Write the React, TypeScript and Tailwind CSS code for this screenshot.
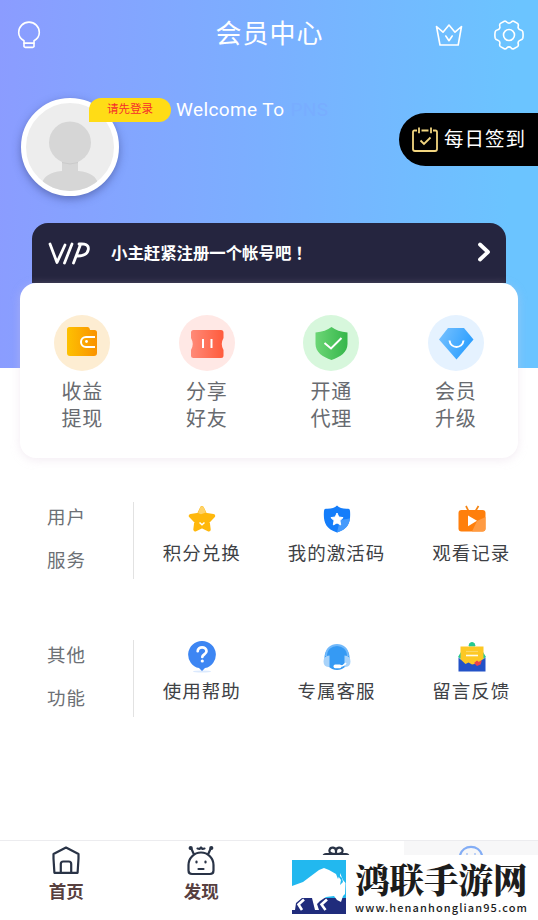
import type { ReactNode } from "react";

interface ItemProps {
  icon: ReactNode;
  label: string;
}

function BulbIcon() {
  return (
    <svg className="w-6 h-7" viewBox="0 0 24 28" fill="none" stroke="white" strokeWidth={1.6} strokeLinejoin="round">
      <path d="M7 22.300v-2.600C4 18 1.700 14.700 1.700 11.400a10.300 10.300 0 0 1 20.600 0c0 3.300-2.300 6.600-5.300 8.300v2.600z" />
      <path d="M7 22.300h10v3.300l-1.200.8H8.200L7 25.600z" />
    </svg>
  );
}

function CrownIcon() {
  return (
    <svg className="w-7 h-6" viewBox="0 0 28 24" fill="none" stroke="white" strokeWidth={1.600} strokeLinecap="round" strokeLinejoin="round">
      <path d="M1.500 3.500l6.500 5.700L14 2l6 7.200 6.500-5.700L23.200 22H5z" />
      <path d="M10.800 13l3.200 4.700L17.200 13" />
    </svg>
  );
}

function GearIcon() {
  return (
    <svg className="w-[30px] h-[30px]" viewBox="0 0 30 30" fill="none" stroke="white" strokeWidth={1.600} strokeLinejoin="round">
      <path d="M10.300 1.300c1-.5 2 .1 2.700 1 .9 1.100 3.100 1.100 4 0 .7-.9 1.700-1.500 2.700-1l3.800 2.100c1 .6 1 1.700.7 2.800-.5 1.500.5 3.200 2 3.600 1.200.3 2.300.8 2.600 2 .4 2.100.4 4.300 0 6.400-.3 1.200-1.400 1.700-2.600 2-1.500.4-2.500 2.100-2 3.600.3 1.100.3 2.200-.7 2.800l-3.800 2.100c-1 .5-2-.1-2.700-1-.9-1.100-3.100-1.100-4 0-.7.9-1.700 1.500-2.700 1l-3.800-2.100c-1-.6-1-1.700-.7-2.800.5-1.500-.5-3.200-2-3.600-1.200-.3-2.300-.8-2.600-2a16 16 0 0 1 0-6.400c.3-1.200 1.400-1.700 2.600-2 1.500-.4 2.500-2.100 2-3.600-.3-1.100-.3-2.200.7-2.800z" />
      <circle cx="15" cy="15" r="5.500" />
    </svg>
  );
}

function Avatar() {
  return (
    <div className="w-[98px] h-[98px] rounded-full border-[5px] border-white bg-[#ededed] overflow-hidden shadow-[0_3px_8px_rgba(50,60,120,0.5)]">
      <svg className="w-full h-full" viewBox="0 0 88 88" fill="#d6d6d6">
        <path d="M36 56h16v12c13 1 18 6 20 12l-6 8H18l-2-8c2-6 7-11 20-12z" />
        <circle cx="44" cy="39.500" r="21" />
        <path d="M36 59.500q8 3 16 0" fill="none" stroke="#cacaca" />
      </svg>
    </div>
  );
}

function CalendarIcon() {
  return (
    <svg className="w-[26px] h-[25px]" viewBox="0 0 26 25" fill="none" stroke="#f2d680" strokeWidth={1.800}>
      <path d="M5 3.500H2.500Q1 3.500 1 5v17q0 2 2 2h20q2 0 2-2V5q0-1.500-1.500-1.500H21M9.500 3.500h7M7 .5v5.800M19 .5v5.800" />
      <path d="M8.500 13.500l3.500 3.500 6.500-6.500" />
    </svg>
  );
}

function VipLogo() {
  return (
    <svg className="w-[43px] h-[23px]" viewBox="0 0 43 23" fill="none" stroke="white" strokeWidth={2.800} strokeLinecap="round" strokeLinejoin="round">
      <path d="M2 2l7 18.500L17 3M24 2l-7.500 19M32.500 2.500L25.500 21M31 2c6-.8 10 1 9.300 5.500C39.600 11.500 36 14 29.500 14" />
    </svg>
  );
}

function WalletIcon() {
  return (
    <svg className="w-14 h-14" viewBox="0 0 56 56">
      <defs>
        <linearGradient id="wallet">
          <stop stopColor="#fdc102" />
          <stop offset="1" stopColor="#fa9200" />
        </linearGradient>
      </defs>
      <circle cx="28" cy="28" r="28" fill="#fdedd2" />
      <path d="M15.500 12h18q2 0 2.500 3h4.500q2.500 0 2.500 2.500V38q0 3-3 3H16q-3 0-3-3V14.500q0-2.500 2.500-2.500z" fill="url(#wallet)" />
      <path d="M41 22h-9a5 5 0 0 0 0 10h9" fill="none" stroke="white" strokeWidth={2} />
      <circle cx="32.500" cy="26.500" r="1.400" fill="white" />
    </svg>
  );
}

function TicketIcon() {
  return (
    <svg className="w-14 h-14" viewBox="0 0 56 56">
      <defs>
        <linearGradient id="ticket">
          <stop stopColor="#ff8a78" />
          <stop offset="1" stopColor="#ff5b3c" />
        </linearGradient>
      </defs>
      <circle cx="28" cy="28" r="28" fill="#ffe8e5" />
      <path d="M14.500 15h27.500q2.500 0 2.500 2.500V23q-3.500 6 0 12v5.500q0 2.500-2.500 2.500H14.500q-2.500 0-2.500-2.500V35q3.500-6 0-12v-5.500Q12 15 14.500 15z" fill="url(#ticket)" />
      <path d="M24 24v9M32.500 24v9" stroke="white" strokeWidth={2} />
    </svg>
  );
}

function ShieldCheckIcon() {
  return (
    <svg className="w-14 h-14" viewBox="0 0 56 56">
      <defs>
        <linearGradient id="shield">
          <stop stopColor="#6cd676" />
          <stop offset="1" stopColor="#35b64a" />
        </linearGradient>
      </defs>
      <circle cx="28" cy="28" r="28" fill="#d7f7dc" />
      <path d="M28.500 12c4 3 9 5 16 5.500V29c0 8-7 13-16 16-9-3-16-8-16-16V17.500c7-.5 12-2.500 16-5.500z" fill="url(#shield)" />
      <path d="M21.500 28l6.500 5.500L38.500 23" fill="none" stroke="white" strokeWidth={2} />
    </svg>
  );
}

function DiamondIcon() {
  return (
    <svg className="w-14 h-14" viewBox="0 0 56 56">
      <defs>
        <linearGradient id="diamond" x2="1" y2=".4">
          <stop stopColor="#79c2ff" />
          <stop offset="1" stopColor="#2c9fff" />
        </linearGradient>
      </defs>
      <circle cx="28" cy="28" r="28" fill="#e5f2ff" />
      <path d="M20 13h16l9.500 11.500L28.500 44.500 11 24.500z" fill="url(#diamond)" />
      <path d="M21.500 25.500c1 8.500 13 8.500 14 0" fill="none" stroke="white" strokeWidth={2} />
    </svg>
  );
}

function StarIcon() {
  return (
    <svg className="w-7 h-7" viewBox="0 0 28 28" fill="none">
      <path d="M14 3l3.200 6.800 8 1.100-5.500 5.600 1 8-6.700-3.200-6.700 3.200 1-8-5.500-5.600 8-1.100z" fill="#ffb80c" stroke="#ffb80c" strokeWidth={4} strokeLinejoin="round" />
      <path d="M12.500 2q1.500-1.500 3 0L18 7.500l-5 1.700-3-1.200z" fill="#ffd369" />
      <path d="M11.500 17.500l2.500 2.300 2.500-2.300" stroke="white" strokeWidth={1.500} />
    </svg>
  );
}

function CodeShieldIcon() {
  return (
    <svg className="w-7 h-7" viewBox="0 0 28 28">
      <path d="M14 .5c2.500 2.300 6 3.500 11 3.200q2 0 2 2c.8 10.500-.8 17.800-13 21.800C1.800 23.500.2 16.200 1 5.700q0-2 2-2C8 4 11.500 2.800 14 .5z" fill="#147dfa" />
      <path d="M14 27.500c9.500-3 12.300-8 12.900-14L17 15z" fill="#459afc" />
      <path d="M14 8l1.800 4 4.300.6-3.200 3 .8 4.300-3.700-2-3.700 2 .8-4.300-3.200-3 4.300-.6z" fill="white" stroke="white" strokeLinejoin="round" />
    </svg>
  );
}

function VideoIcon() {
  return (
    <svg className="w-7 h-7" viewBox="0 0 28 28">
      <path d="M8 1l2.500 5M20.500 1l-3 5" stroke="#f58412" strokeWidth={1.700} />
      <rect x=".5" y="5" width="27" height="21.500" rx="3" fill="#ff7f0c" />
      <path d="M14 26.500l5-10.500 8.500-4v11.500q0 3-3 3z" fill="#ff9b43" />
      <path d="M10 10.500l9 5.300-9 5.500z" fill="white" />
    </svg>
  );
}

function HelpIcon() {
  return (
    <svg className="w-7 h-[32px]" viewBox="0 0 28 32">
      <ellipse cx="14" cy="30.500" rx="9" ry="1" fill="#dbe9fd" />
      <path d="M14 0a13.700 13.700 0 0 1 3 27.100L14 30l-3-2.900A13.700 13.700 0 0 1 14 0z" fill="#3d86f3" />
      <path d="M9.700 10.200c0-5.200 8.800-5.200 8.800 0 0 3-4.200 3.200-4.200 5.800" fill="none" stroke="white" strokeWidth={2.700} strokeLinecap="round" />
      <circle cx="14.300" cy="20" r="1.600" fill="white" />
    </svg>
  );
}

function HeadsetIcon() {
  return (
    <svg className="w-7 h-7" viewBox="0 0 28 28">
      <circle cx="14" cy="14.500" r="12.500" fill="#359af4" />
      <path d="M3 13C3-1.800 25-1.800 25 13" fill="none" stroke="#72b9fa" strokeWidth={2} />
      <path d="M6.500 12.500v11.500Q.5 24 .5 18.500t6-6zM21.500 12.500v11.500q6 0 6-5.500t-6-6z" fill="#a8d3fa" />
      <path d="M23 20q-2 3-6 3" fill="none" stroke="white" strokeWidth={1.500} />
      <rect x="10.500" y="21.500" width="8" height="3.800" rx="1.700" fill="white" />
    </svg>
  );
}

function MailIcon() {
  return (
    <svg className="w-7 h-[30px]" viewBox="0 0 28 30">
      <path d="M11 4q0-3.500 3-3.500T17 4z" fill="#25c890" stroke="#25c890" />
      <path d="M0 15l3-5h22l3 5-14 9z" fill="#25c890" />
      <path d="M2.500 4.500h23V20L14 25 2.500 20z" fill="#fdc824" />
      <path d="M8 13.500h12" stroke="#fffbe8" strokeWidth={1.600} />
      <path d="M8 9.500h12" stroke="#fbd866" strokeWidth={1.200} />
      <path d="M.5 15.500l7 6.500 3-1.500 3.500 2 5-1 8.500-6v14H.5z" fill="#2352c7" />
      <path d="M16 21l3-2.500 2 1.500 3-2-1.500 4.500L19 24z" fill="#e94350" />
    </svg>
  );
}

function HomeIcon() {
  return (
    <svg className="w-7 h-7" viewBox="0 0 28 28" fill="none" stroke="#293346" strokeWidth={2.200} strokeLinejoin="round">
      <path d="M14 1.500L26.500 8v4.500l-.9 14.300H2.400L1.500 12.500V8zM8.800 26.500V18q0-2.500 2.500-2.500h5.400q2.500 0 2.500 2.500v8.500" />
    </svg>
  );
}

function DiscoverIcon() {
  return (
    <svg className="w-[28px] h-[31px]" viewBox="0 0 28 31" fill="none" stroke="#293346" strokeWidth={2.200} strokeLinecap="round" strokeLinejoin="round">
      <path d="M5 29q-3.500 0-3.500-3.500V20a12.500 12.500 0 0 1 25 0v5.500Q26.500 29 23 29zM7 9.500L4.500 4M21 9.500L23.500 4" />
      <path d="M9.500 16.500v1M18.500 16.500v1M11.500 24h5" />
      <path d="M10.500 3.500l2 .5L14 2.500l1.500 1.500 2-.5" />
      <circle cx="3.700" cy="3" r="1" />
      <circle cx="24.300" cy="3" r="1" />
    </svg>
  );
}

function GiftTopIcon() {
  return (
    <svg className="w-7 h-[10px]" viewBox="0 0 28 10" fill="none" stroke="#293346" strokeWidth={2.200}>
      <path d="M1.500 10Q2 8 4 8h20q2 0 2.500 2M14 8C8.500 8 7 6.500 7.500 4 8.500.5 14 1 14 5v3c5.500 0 7-1.500 6.500-4C19.500.5 14 1 14 5" />
    </svg>
  );
}

function BisonLogo() {
  return (
    <svg className="w-[54px] h-[54px] shrink-0" viewBox="0 0 54 54">
      <path fill="#22b8ef" d="M0 0H54V38H0z" />
      <path fill="#202c7c" d="M0 38H54V54H0z" />
      <path fill="white" d="M0 26L11 22L19 16L27 10L32 8L37 10L44 14L46 19L48 13L51 20L53.500 23L53 34L51 36L49 42L45 40L42 36L34 37L28 41L25 44L27 50H23L20 38L10 38L4 43L3 50H0z" />
      <path fill="none" stroke="white" strokeWidth={2.600} d="M12 39.500L6.500 44.500L10 50M35 39.500L29.500 44.500L33.500 50" />
      <path fill="#22b8ef" d="M48 11L46 16L49 20L48 25L51 22L50 18L48 16z" />
    </svg>
  );
}

const shortcuts = [
  { icon: <WalletIcon />, lines: ["收益", "提现"] },
  { icon: <TicketIcon />, lines: ["分享", "好友"] },
  { icon: <ShieldCheckIcon />, lines: ["开通", "代理"] },
  { icon: <DiamondIcon />, lines: ["会员", "升级"] },
];

const groups = [
  {
    title: ["用户", "服务"],
    items: [
      { icon: <StarIcon />, label: "积分兑换" },
      { icon: <CodeShieldIcon />, label: "我的激活码" },
      { icon: <VideoIcon />, label: "观看记录" },
    ],
  },
  {
    title: ["其他", "功能"],
    items: [
      { icon: <HelpIcon />, label: "使用帮助" },
      { icon: <HeadsetIcon />, label: "专属客服" },
      { icon: <MailIcon />, label: "留言反馈" },
    ],
  },
];

function MenuItem({ icon, label }: ItemProps) {
  return (
    <div className="flex flex-col items-center">
      <div className="h-[33px] flex items-center pl-[2px]">{icon}</div>
      <span className="mt-[5px] pl-[1px] whitespace-nowrap text-[18.500px] leading-[28px] tracking-[1px] text-[#3e4145]">{label}</span>
    </div>
  );
}

export default function App() {
  return (
    <div className="relative w-[538px] h-[920px] overflow-hidden flex flex-col bg-white font-['Roboto','Noto_Sans_CJK_SC',sans-serif]">
      {/* Header */}
      <header className="h-[368px] shrink-0 bg-[linear-gradient(92deg,#8b9cff_0%,#7bafff_48%,#6bc4ff_94%,#6bc4ff_100%)]">
        <div className="h-[70px] grid grid-cols-3 items-center pl-[17px] pr-[14px]">
          <BulbIcon />
          <h1 className="justify-self-center -ml-[2px] -mt-[3px] whitespace-nowrap text-[26px] leading-[34px] tracking-[1px] text-white">会员中心</h1>
          <div className="flex items-center justify-end gap-[31px]">
            <CrownIcon />
            <GearIcon />
          </div>
        </div>

        <div className="h-[153px] flex items-start pl-[21px] pt-7">
          <Avatar />
          <span className="relative -ml-[30px] w-[82px] h-6 rounded-t-xl rounded-br-xl bg-[#ffdc16] text-center text-[11.500px] leading-[23px] text-[#f52c2c]">
            请先登录
          </span>
          <span className="ml-[5px] text-[19px] leading-6 tracking-[0.400px] text-white">Welcome To</span>
          <span className="ml-[6px] text-[19px] leading-6 tracking-[0.400px] text-[#78adff]">PNS</span>
          <div className="ml-auto mt-[15px] w-[139px] h-[53px] shrink-0 rounded-l-full bg-black flex items-center gap-[6px] pl-[13px] text-white text-[19.500px] tracking-[1px] whitespace-nowrap">
            <CalendarIcon />
            每日签到
          </div>
        </div>

        <div className="mx-8 h-[60px] rounded-t-2xl bg-[#25253f] flex items-center pl-4 pr-[15px] text-white">
          <VipLogo />
          <span className="ml-5 text-[16.400px] font-bold whitespace-nowrap">
            小主赶紧注册一个帐号吧<span className="font-['Noto_Sans_CJK_TC',sans-serif]" lang="zh-Hant">！</span>
          </span>
          <svg className="ml-auto mb-[3px] w-[14px] h-5" viewBox="0 0 14 20" fill="none" stroke="white" strokeWidth={3.800} strokeLinecap="round" strokeLinejoin="round">
            <path d="M3 2.500l8 7.500-8 7.500" />
          </svg>
        </div>
      </header>

      {/* Shortcuts */}
      <section className="relative z-10 -mt-[85px] ml-5 w-[498px] h-[175px] shrink-0 rounded-2xl bg-white grid grid-cols-4 pt-8 shadow-[0_2px_10px_rgba(220,200,220,0.350)]">
        {shortcuts.map(({ icon, lines }) => (
          <div key={lines[0]} className="flex flex-col items-center">
            {icon}
            <p className="mt-2 text-center text-[20px] leading-[27px] tracking-[0.800px] text-[#686b70]">
              {lines[0]}
              <br />
              {lines[1]}
            </p>
          </div>
        ))}
      </section>

      {/* Menu groups */}
      <main className="mt-[44px] flex flex-col gap-[61px]">
        {groups.map(({ title, items }) => (
          <section key={title[0]} className="h-[77px] flex">
            <div className="w-[134px] border-r border-[#e2e2e2] flex flex-col items-center text-[18.500px] leading-[43px] tracking-[1px] text-[#6c7075]">
              <span className="-mt-[5px]">{title[0]}</span>
              <span>{title[1]}</span>
            </div>
            <div className="flex-1 grid grid-cols-3">
              {items.map((item) => (
                <MenuItem key={item.label} {...item} />
              ))}
            </div>
          </section>
        ))}
      </main>

      {/* Tab bar */}
      <nav className="mt-auto h-20 shrink-0 border-t border-[#ececef] grid grid-cols-4 text-[17.500px] leading-[26px] font-bold text-[#57403f]">
        <div className="flex flex-col items-center pt-[5px] pr-[2px]">
          <div className="h-[33px]"><HomeIcon /></div>
          首页
        </div>
        <div className="flex flex-col items-center pt-1 pr-[1px]">
          <div className="h-[34px]"><DiscoverIcon /></div>
          发现
        </div>
        <div className="flex flex-col items-center pt-[5px]">
          <GiftTopIcon />
        </div>
        <div className="flex flex-col items-center pt-1 bg-[#f7f7f8]">
          <svg className="w-7 h-[10px]" viewBox="0 0 28 10" fill="none" stroke="#83adf5" strokeWidth={2.400}>
            <path d="M3 10a11.500 11.500 0 0 1 22 0" />
            <path d="M9 9h2M17 9h2" strokeWidth={1} />
          </svg>
        </div>
      </nav>

      {/* Site banner */}
      <aside className="absolute right-0 bottom-0 w-[250px] h-[65px] bg-white flex items-start pl-1 pt-[5px] gap-[9px]">
        <BisonLogo />
        <div className="-mt-[2px] flex flex-col whitespace-nowrap text-[#1c1c1c]">
          <strong className="font-['Noto_Serif_CJK_SC','Noto_Sans_CJK_SC',serif] text-[34.500px] leading-[41px] font-black">鸿联手游网</strong>
          <span className="font-['Noto_Sans_CJK_SC',sans-serif] text-[11px] leading-[16px] font-medium tracking-[1.100px]">www.henanhonglian95.com</span>
        </div>
      </aside>
    </div>
  );
}
